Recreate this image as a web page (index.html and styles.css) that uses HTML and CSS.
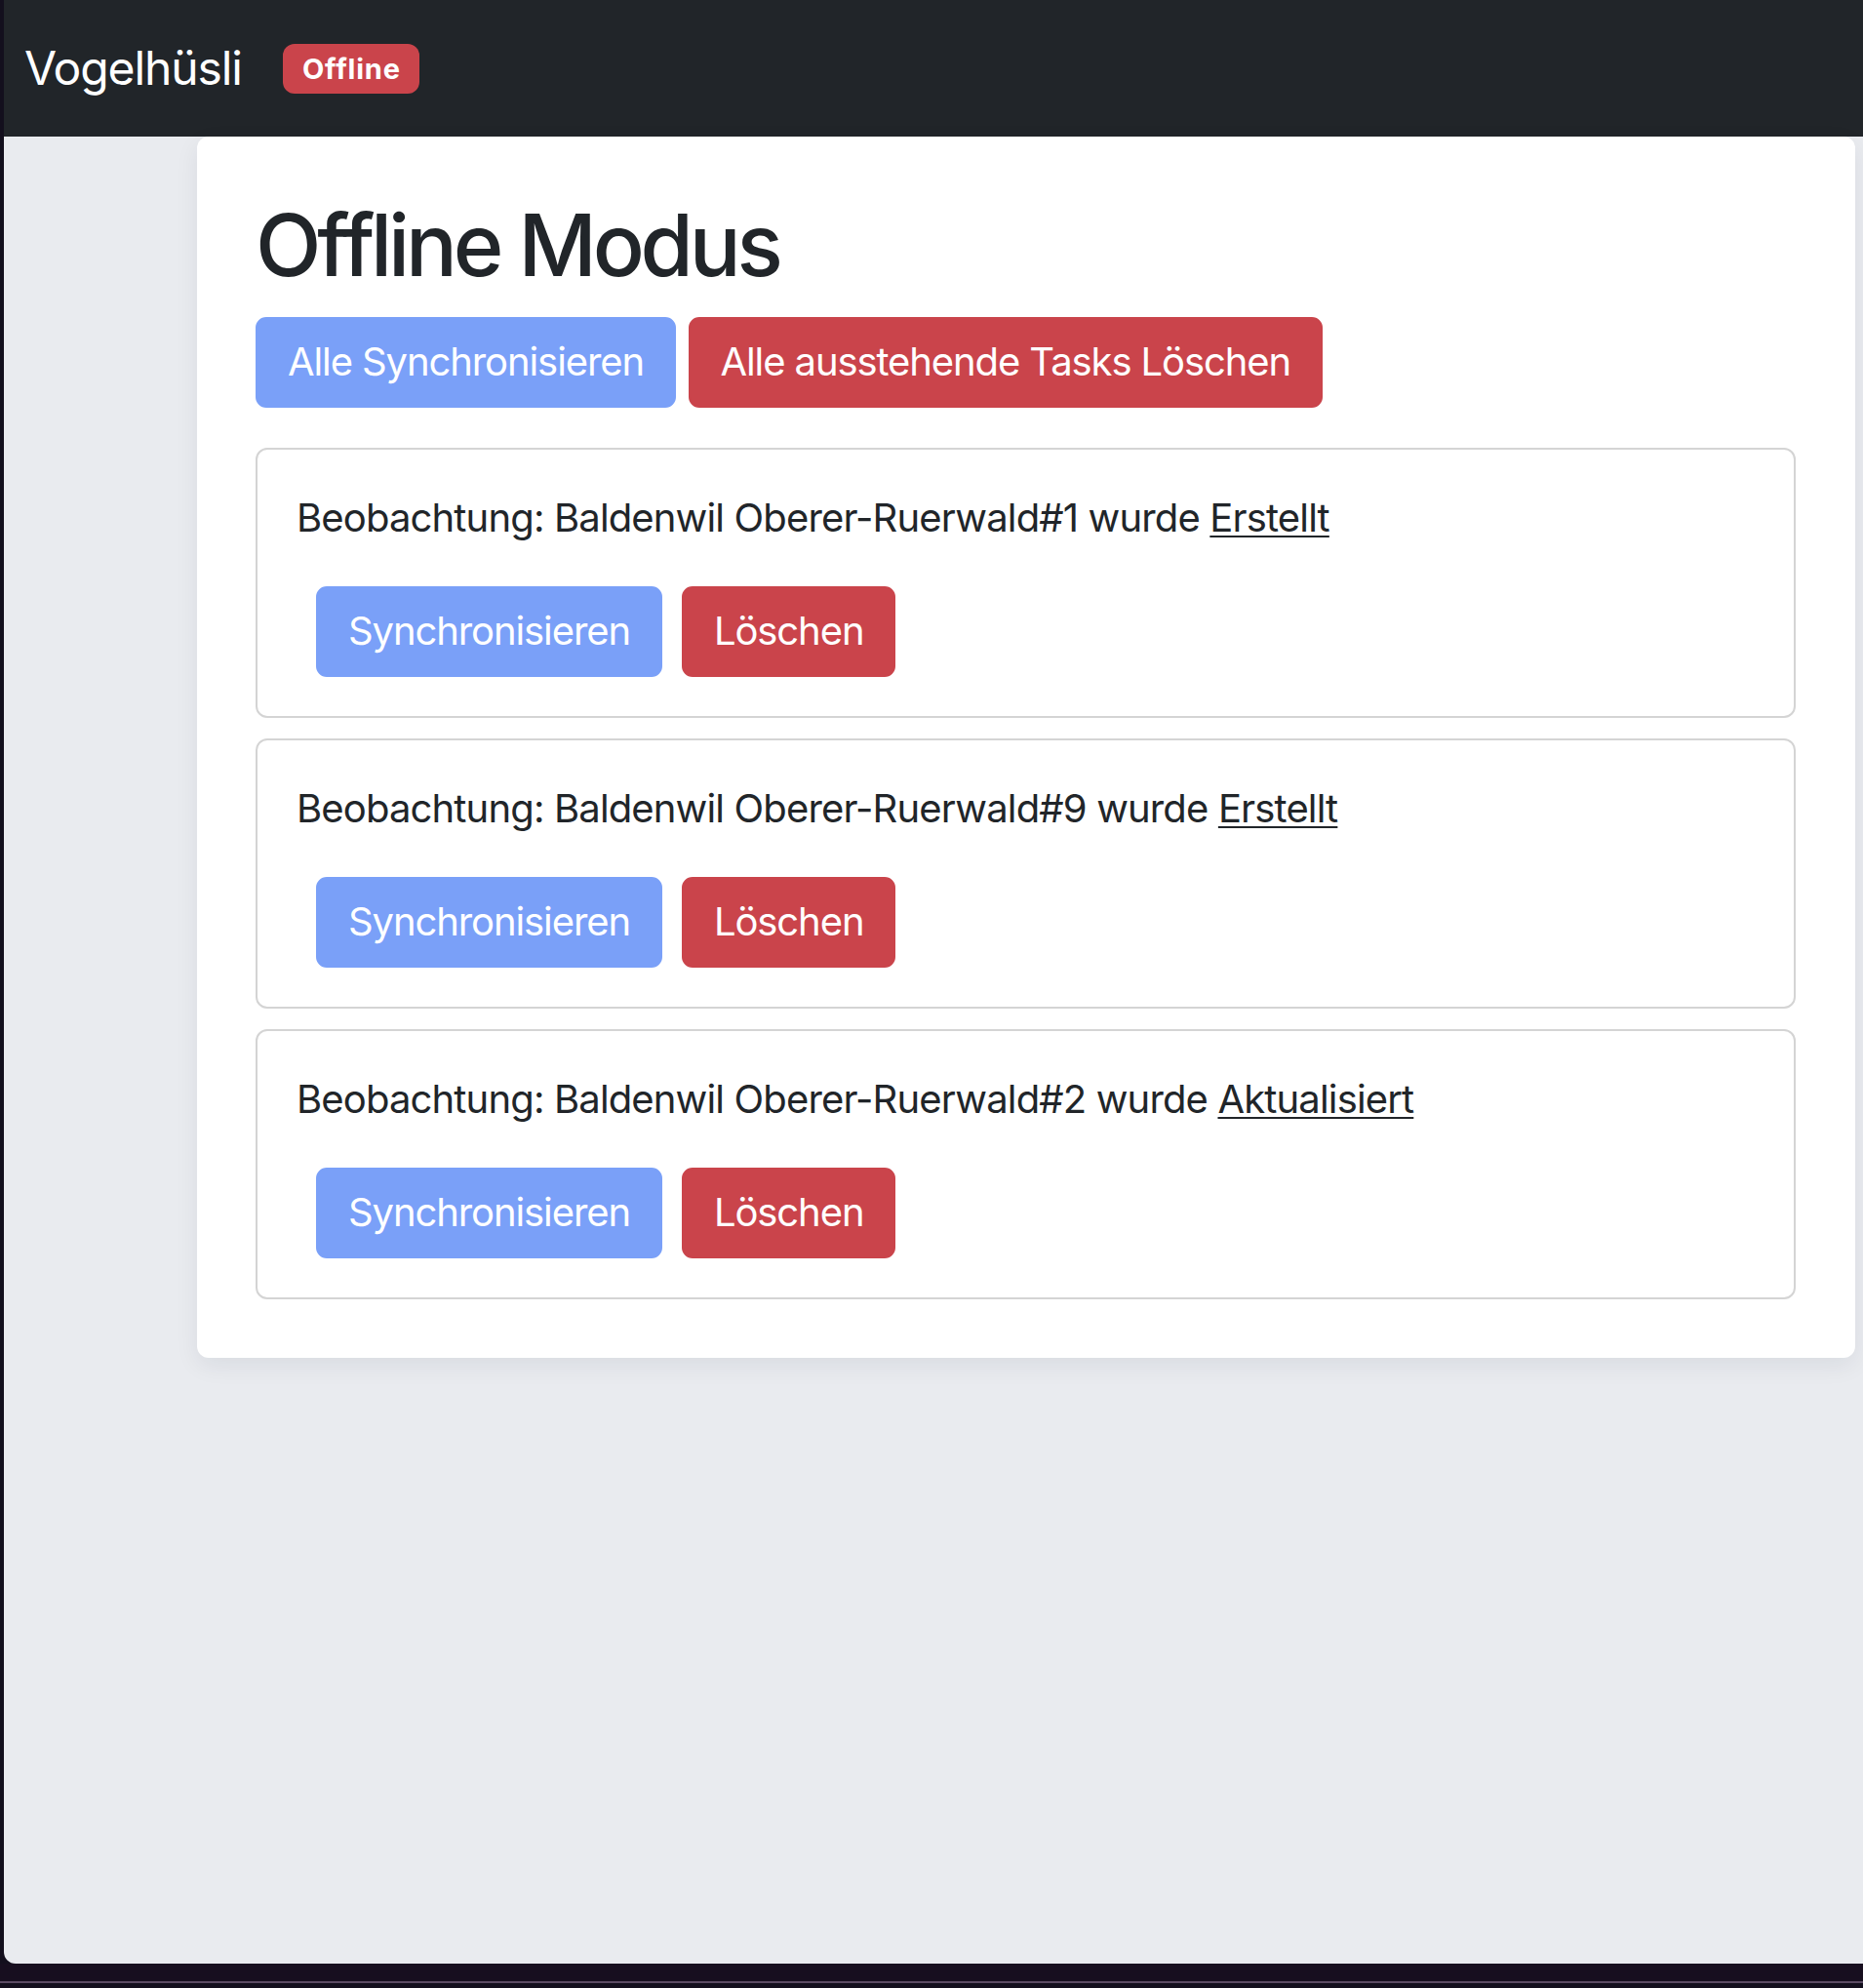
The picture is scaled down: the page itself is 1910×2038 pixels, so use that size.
FILE: index.html
```html
<!DOCTYPE html>
<html lang="de">
<head>
<meta charset="utf-8">
<title>Vogelhüsli – Offline Modus</title>
<link rel="stylesheet" href="styles.css">
</head>
<body>
<div class="screen">
  <div class="window">
    <nav class="navbar">
      <span class="brand">Vogelhüsli</span>
      <span class="badge">Offline</span>
    </nav>
    <div class="content">
      <main class="panel">
        <h1 class="title">Offline Modus</h1>
        <div class="toolbar">
          <button class="btn btn-primary">Alle Synchronisieren</button>
          <button class="btn btn-danger">Alle ausstehende Tasks Löschen</button>
        </div>
        <div class="task">
          <p class="task-text">Beobachtung: Baldenwil Oberer-Ruerwald#1 wurde <a class="task-link" href="#">Erstellt</a></p>
          <div class="task-actions">
            <button class="btn btn-primary">Synchronisieren</button>
            <button class="btn btn-danger">Löschen</button>
          </div>
        </div>
        <div class="task">
          <p class="task-text">Beobachtung: Baldenwil Oberer-Ruerwald#9 wurde <a class="task-link" href="#">Erstellt</a></p>
          <div class="task-actions">
            <button class="btn btn-primary">Synchronisieren</button>
            <button class="btn btn-danger">Löschen</button>
          </div>
        </div>
        <div class="task">
          <p class="task-text">Beobachtung: Baldenwil Oberer-Ruerwald#2 wurde <a class="task-link" href="#">Aktualisiert</a></p>
          <div class="task-actions">
            <button class="btn btn-primary">Synchronisieren</button>
            <button class="btn btn-danger">Löschen</button>
          </div>
        </div>
      </main>
    </div>
  </div>
  <div class="dock"></div>
</div>
</body>
</html>
```
FILE: styles.css
```css
* { box-sizing: border-box; }

html, body {
  margin: 0;
  padding: 0;
  height: 2038px;
  overflow: hidden;
  background: #0f0f10;
}

body {
  font-family: Inter, "Liberation Sans", sans-serif;
  color: #212529;
}

.screen {
  height: 2038px;
  background: #130f1d;
  display: flex;
  flex-direction: column;
}

.window {
  margin-left: 4px;
  height: 2013px;
  background: #e9ebef;
  border-bottom-left-radius: 12px;
  overflow: hidden;
  display: flex;
  flex-direction: column;
}

.dock {
  height: 20px;
  background: #170e1f;
  border-bottom: 2px solid #5b4b63;
}

.navbar {
  height: 140px;
  flex: none;
  background: #212529;
  display: flex;
  align-items: center;
  padding-left: 21px;
}

.brand {
  color: #ffffff;
  font-size: 48px;
  line-height: 1;
  letter-spacing: -1.1px;
}

.badge {
  margin-left: 42px;
  background: #ca444b;
  color: #ffffff;
  font-size: 29px;
  font-weight: 700;
  line-height: 1;
  letter-spacing: 0.8px;
  padding: 11px 19px 11px 20px;
  border-radius: 12px;
}

.content {
  padding: 0 8px 0 198px;
}

.panel {
  background: #ffffff;
  border-radius: 12px;
  box-shadow: 0 8px 24px rgba(20, 30, 60, 0.07);
  padding: 59px 61px 60px 60px;
}

.title {
  margin: 0 0 20px;
  font-size: 88px;
  font-weight: 500;
  line-height: 1.2;
  letter-spacing: -4.2px;
}

.toolbar {
  display: flex;
  gap: 12.5px;
  margin-bottom: 41px;
}

.btn {
  font-family: inherit;
  font-size: 40px;
  line-height: 60px;
  letter-spacing: -1.1px;
  padding: 14.5px 31px;
  border: 2px solid transparent;
  border-radius: 11px;
  color: #ffffff;
  cursor: pointer;
}

.btn-primary {
  background: #7aa0f8;
  border-color: #7aa0f8;
}

.btn-danger {
  background: #ca444b;
  border-color: #ca444b;
}

.task {
  border: 2px solid #d4d4d4;
  border-radius: 12px;
  padding: 40px;
  margin-bottom: 21px;
}

.task:last-child {
  margin-bottom: 0;
}

.task-text {
  margin: 0 0 40px;
  font-size: 40px;
  line-height: 60px;
  letter-spacing: -0.85px;
}

.task-link {
  color: #212529;
  text-decoration: underline;
  text-decoration-thickness: 2px;
  text-underline-offset: 4px;
}

.task-actions {
  display: flex;
  gap: 20px;
  padding-left: 20px;
}
```
